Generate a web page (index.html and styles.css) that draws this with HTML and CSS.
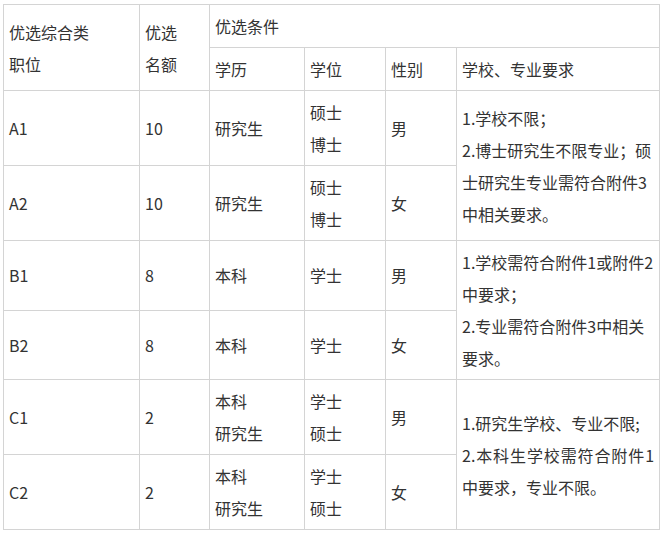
FILE: index.html
```html
<!DOCTYPE html>
<html lang="zh-CN">
<head>
<meta charset="utf-8">
<title>优选综合类职位</title>
<link rel="stylesheet" href="styles.css">
</head>
<body>
<table class="grid">
  <colgroup>
    <col class="c-pos">
    <col class="c-num">
    <col class="c-edu">
    <col class="c-deg">
    <col class="c-sex">
    <col class="c-req">
  </colgroup>
  <tr>
    <td rowspan="2">优选综合类<br>职位</td>
    <td rowspan="2">优选<br>名额</td>
    <td colspan="4">优选条件</td>
  </tr>
  <tr>
    <td>学历</td>
    <td>学位</td>
    <td>性别</td>
    <td>学校、专业要求</td>
  </tr>
  <tr>
    <td>A1</td>
    <td>10</td>
    <td>研究生</td>
    <td>硕士<br>博士</td>
    <td>男</td>
    <td rowspan="2" class="req"><p>1.学校不限；</p><p>2.博士研究生不限专业；硕士研究生专业需符合附件3中相关要求。</p></td>
  </tr>
  <tr>
    <td>A2</td>
    <td>10</td>
    <td>研究生</td>
    <td>硕士<br>博士</td>
    <td>女</td>
  </tr>
  <tr>
    <td>B1</td>
    <td>8</td>
    <td>本科</td>
    <td>学士</td>
    <td>男</td>
    <td rowspan="2" class="req"><p>1.学校需符合附件1或附件2中要求；</p><p>2.专业需符合附件3中相关要求。</p></td>
  </tr>
  <tr>
    <td>B2</td>
    <td>8</td>
    <td>本科</td>
    <td>学士</td>
    <td>女</td>
  </tr>
  <tr>
    <td>C1</td>
    <td>2</td>
    <td>本科<br>研究生</td>
    <td>学士<br>硕士</td>
    <td>男</td>
    <td rowspan="2" class="req"><p>1.研究生学校、专业不限;</p><p><span class="full">2.本科生学校需符合附件1</span>中要求，专业不限。</p></td>
  </tr>
  <tr>
    <td>C2</td>
    <td>2</td>
    <td>本科<br>研究生</td>
    <td>学士<br>硕士</td>
    <td>女</td>
  </tr>
</table>
</body>
</html>
```

FILE: styles.css
```css
html, body {
  margin: 0;
  padding: 0;
  background: #ffffff;
}

body {
  padding: 4px 0 0 3px;
  font-family: "Noto Sans CJK SC", "Noto Sans", sans-serif;
  font-size: 16px;
  line-height: 32px;
  color: #333333;
}

.grid {
  table-layout: fixed;
  width: 657px;
  border-collapse: separate;
  border-spacing: 0;
  border-top: 1px solid #d4d4d4;
  border-left: 1px solid #d4d4d4;
}

.c-pos { width: 136px; }
.c-num { width: 70px; }
.c-edu { width: 95px; }
.c-deg { width: 81px; }
.c-sex { width: 71px; }
.c-req { width: 203px; }

.grid td {
  box-sizing: border-box;
  padding: 5px 5px;
  border-right: 1px solid #d4d4d4;
  border-bottom: 1px solid #d4d4d4;
  vertical-align: middle;
  text-align: left;
  word-break: normal;
}

.req {
  text-align: justify;
}

.req p {
  margin: 0;
}

.req .full {
  display: block;
  text-align-last: justify;
}
```
